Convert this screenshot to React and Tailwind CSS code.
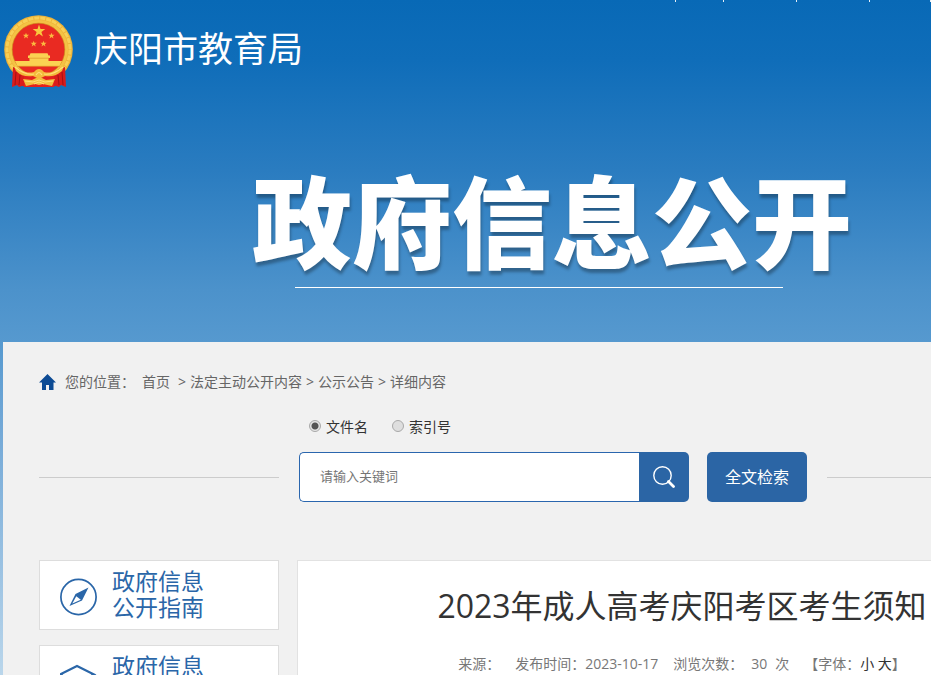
import React, { useState } from 'react';

const Emblem = () => (
    <svg width="70" height="74" viewBox="0 0 70 74" aria-hidden="true">
        <circle cx="34.500" cy="34.500" r="34.300" fill="#eeb238" />
        <circle cx="34.500" cy="34.500" r="31.500" fill="none" stroke="#f8cf55" strokeWidth="3" strokeDasharray="5 1" />
        <circle cx="34.500" cy="34.500" r="28" fill="none" stroke="#f4c244" strokeWidth="3" />
        <circle cx="34.500" cy="34.500" r="26.300" fill="#e92a22" stroke="#c9881c" strokeWidth="0.600" />
        <path d="M35 9.500l1.500 4.500h4.800l-3.900 2.900 1.500 4.600-3.900-2.800-3.900 2.800 1.500-4.600-3.900-2.900H33.500z" fill="#f9c93f" />
        {['22,20.7', '47.500,20.7', '29.700,28.700', '39.500,28.700'].map((pos) => (
            <path
                key={pos}
                transform={`translate(${pos})`}
                d="M0-3l.8 2.100h2.300l-1.800 1.400.7 2.300-2-1.400-2 1.400.7-2.300-1.800-1.400h2.300z"
                fill="#fbb93f"
            />
        ))}
        <path d="M26.500 38.300h17l1 2.200h1.500v2.500h-1.500v3h-19v-3H24v-2.500h1.500z" fill="#fbd252" />
        <path d="M25 43.200h20" stroke="#dd9326" strokeWidth="0.700" />
        <path d="M11 46h47l-2.500 5h-42z" fill="#fbd252" />
        <path d="M13 51.300h43" stroke="#e39a2b" strokeWidth="0.800" />
        <path d="M9 52l6 2 8 7 1 11-6-1-3 1-2-2-5 2z" fill="#d91c1a" />
        <path d="M61 52l-6 2-8 7-1 11 6-1 3 1 2-2 5 2z" fill="#d91c1a" />
        <path d="M20 60h30v12H20z" fill="#e3211d" />
        <path d="M12 57l-1 13M16 60l-1 10M58 57l1 13M54 60l1 10" stroke="#9f0f14" strokeWidth="0.900" />
        <path d="M9 49c7 7 14 10 21 8l2-2q3-2 6 0l2 2c7 2 14-1 21-8l-3 7c-6 5-11 6-17 5l-4 2h-4l-4-2c-6 1-12 0-17-5z" fill="#f4bb3c" />
        <path d="M11 52c7 6 13 8 19 7M59 52c-7 6-13 8-19 7M32 60q3-5 6 0" fill="none" stroke="#ffe07a" strokeWidth="1.100" />
        <path d="M19 64l9 1 4-2h6l4 2 9-1-3 7-9-2-4 1-4-1-9 2z" fill="#f2bd3e" />
        <path d="M21 66l8 1 6-2 6 2 8-1M30 69l5-2 5 2" fill="none" stroke="#ffe17a" strokeWidth="0.900" />
    </svg>
);

const HomeIcon = () => (
    <svg width="17" height="16" viewBox="0 0 17 16" fill="#0d4b94" aria-hidden="true">
        <path d="M8.500 0L17 8.500h-2.500V16H10v-5H7v5H3V8.500H0z" />
    </svg>
);

const SearchIcon = () => (
    <svg width="22" height="22" viewBox="0 0 22 22" fill="none" stroke="white" aria-hidden="true">
        <circle cx="9.500" cy="9.500" r="8.700" strokeWidth="1.400" />
        <path d="M15.500 15.500l5 5" strokeWidth="2.800" strokeLinecap="round" />
    </svg>
);

const CompassIcon = () => (
    <svg width="38" height="38" viewBox="0 0 38 38" fill="none" aria-hidden="true">
        <circle cx="18.500" cy="19" r="17.600" stroke="#2a66a8" strokeWidth="1.700" />
        <path d="M28.500 9.500L15.500 16 9.500 28 22 22.500z" fill="#2a66a8" />
        <path d="M16.300 18.300l4.500 3.500-8.500 3.800z" fill="white" />
    </svg>
);

const LayersIcon = () => (
    <svg width="38" height="38" viewBox="0 0 38 38" fill="none" stroke="#2a66a8" strokeWidth="2.200" aria-hidden="true">
        <path d="M0 11.500L17 3 34 11.500 17 20z" />
        <path d="M0 19l17 8.500L34 19M0 26l17 8.500L34 26" />
    </svg>
);

const guides = [
    { id: 'guide', lines: ['政府信息', '公开指南'], Icon: CompassIcon },
    { id: 'system', lines: ['政府信息'], Icon: LayersIcon },
];

const crumbs = ['法定主动公开内容', '公示公告', '详细内容'];

const RadioOption = ({ label, value, current, onChange }) => (
    <label className="flex items-center gap-[5px]">
        <input
            type="radio"
            name="field"
            value={value}
            checked={current === value}
            onChange={() => onChange(value)}
            className="-mt-[2px] h-3 w-3 appearance-none rounded-full border border-[#a9a9a9] bg-[#dedede] checked:bg-[radial-gradient(circle,#555_0_3px,#e6e6e6_4px)]"
        />
        {label}
    </label>
);

const App = () => {
    const [field, setField] = useState('title');
    const [keyword, setKeyword] = useState('');

    return (
        <div className="h-screen overflow-hidden bg-[linear-gradient(#0869b6_0px,#0f6db9_60px,#2a7cc0_170px,#4c92cb_290px,#5699cf_342px,#74a9d7_430px,#bad6eb_675px)] font-['Open_Sans','Noto_Sans_CJK_SC',sans-serif] text-sm text-[#666]">
            <div className="min-w-[1106px]">
                <header className="h-[342px]">
                    {/* Top link dividers */}
                    <div className="flex h-[15px] items-start pl-[675px]">
                        <i className="mr-[47px] h-[2px] w-px bg-white/90"></i>
                        <i className="mr-[72px] h-[2px] w-px bg-white/90"></i>
                        <i className="mr-[72px] h-[2px] w-px bg-white/90"></i>
                        <i className="mr-[60px] h-[2px] w-px bg-white/90"></i>
                        <i className="h-[2px] w-px bg-white/90"></i>
                    </div>
                    <div className="flex items-start gap-[19px] pl-1">
                        <Emblem />
                        <span className="text-[35px] leading-[68px] text-white">庆阳市教育局</span>
                    </div>
                    <div className="mx-auto mt-[78px] w-[602px]">
                        <h1 className="text-[100px] leading-[110px] font-black text-white [text-shadow:1px_4px_3px_rgba(0,0,0,0.3)]">
                            政府信息公开
                        </h1>
                        <div className="mt-[10px] ml-[43px] h-px w-[488px] bg-white"></div>
                    </div>
                </header>

                <main className="mx-[3px] min-h-[400px] bg-[#f1f1f1] px-9 pt-[30px]">
                    <nav className="flex h-5 items-center">
                        <HomeIcon />
                        <span className="ml-[9px]">您的位置：</span>
                        <a href="#home" className="mr-1 ml-[7px]">首页</a>
                        {crumbs.map((item) => (
                            <React.Fragment key={item}>
                                <span className="mx-1">&gt;</span>
                                <a href="#list">{item}</a>
                            </React.Fragment>
                        ))}
                    </nav>

                    <div className="mt-[25px] flex h-5 items-center gap-6 pl-[270px] text-[#333]">
                        <RadioOption label="文件名" value="title" current={field} onChange={setField} />
                        <RadioOption label="索引号" value="index" current={field} onChange={setField} />
                    </div>

                    <form className="mt-[15px] flex items-center" onSubmit={(e) => e.preventDefault()}>
                        <div className="h-px flex-1 bg-[#ccc]"></div>
                        <input
                            type="text"
                            aria-label="请输入关键词"
                            placeholder="请输入关键词"
                            value={keyword}
                            onChange={(e) => setKeyword(e.target.value)}
                            className="ml-5 h-[50px] w-[340px] rounded-l-[5px] border border-r-0 border-[#2a66ae] bg-white px-5 pb-[2px] text-[13px] outline-none placeholder:text-[#757575]"
                        />
                        <button type="submit" aria-label="搜索" className="flex h-[50px] w-[50px] items-center justify-center rounded-r-[5px] bg-[#2b65a5]">
                            <SearchIcon />
                        </button>
                        <button type="button" className="mr-5 ml-[18px] h-[50px] w-[100px] rounded-[5px] bg-[#2b65a5] text-base text-white">
                            全文检索
                        </button>
                        <div className="h-px flex-1 bg-[#ccc]"></div>
                    </form>

                    <div className="mt-[58px] flex items-start gap-[18px]">
                        <aside className="flex w-60 flex-col gap-[15px]">
                            {guides.map(({ id, lines, Icon }) => (
                                <a
                                    key={id}
                                    href={`#${id}`}
                                    className="flex h-[70px] items-start gap-[14px] border border-[#ddd] bg-white pl-5 text-[23px] leading-[26px] text-[#2a66a8]"
                                >
                                    <span className="mt-[17px]">
                                        <Icon />
                                    </span>
                                    <span className="mt-[7px]">
                                        {lines.map((line) => (
                                            <span key={line} className="block">{line}</span>
                                        ))}
                                    </span>
                                </a>
                            ))}
                        </aside>

                        <article className="min-h-60 flex-1 border border-[#e2e2e2] bg-white pt-[21px] text-center">
                            <h2 className="text-[32px] leading-[48px] text-[#333]">2023年成人高考庆阳考区考生须知</h2>
                            <div className="mt-6 flex justify-center gap-[15px] leading-5 text-[#777]">
                                <span>来源：</span>
                                <span>发布时间：2023-10-17</span>
                                <span className="flex gap-2">
                                    <span>浏览次数：</span>
                                    <span>30</span>
                                    <span>次</span>
                                </span>
                                <span>
                                    【字体：
                                    <button type="button" className="text-[#333]">小</button>{' '}
                                    <button type="button" className="text-[#333]">大</button>】
                                </span>
                            </div>
                        </article>
                    </div>
                </main>
            </div>
        </div>
    );
};

export default App;
